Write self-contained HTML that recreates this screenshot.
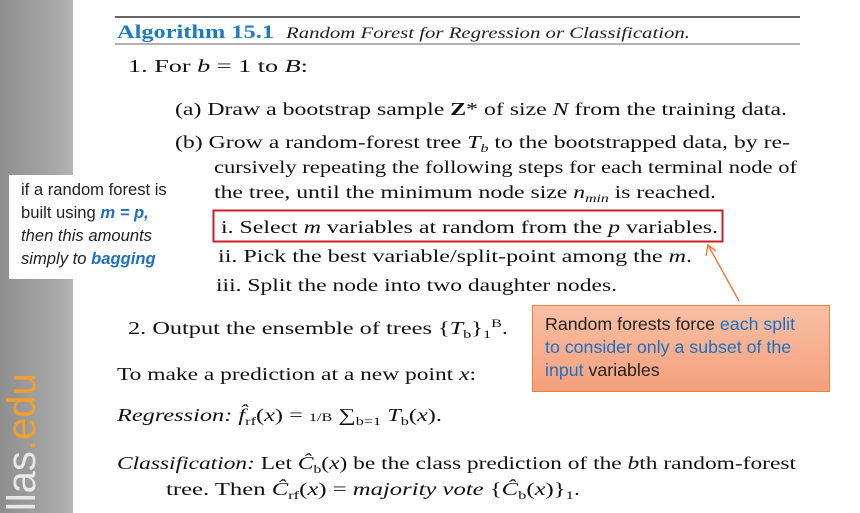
<!DOCTYPE html>
<html><head><meta charset="utf-8"><style>
html,body{margin:0;width:860px;height:513px;overflow:hidden}
body{background:#fff;position:relative;font-family:"Liberation Serif",serif}
#side{position:absolute;left:0;top:0;width:73px;height:513px;background:linear-gradient(90deg,#8e8e8e,#a9a9a9 80%,#b5b5b5);overflow:hidden}
#vt{position:absolute;left:1px;top:520px;transform-origin:0 0;transform:rotate(-90deg);font:40px/42px "Liberation Sans",sans-serif;color:#e8e8e8;white-space:nowrap;}
#vt span{color:#f0a030}
#wb{position:absolute;left:9px;top:175px;width:172px;height:104px;background:#fff;font:16.6px/23px "Liberation Sans",sans-serif;color:#222;padding:3px 0 0 12px;box-sizing:border-box;white-space:nowrap;overflow:hidden}
.b{color:#1f6fc0;font-weight:bold;font-style:italic}
#ob{position:absolute;left:532px;top:305px;width:298px;height:87px;background:linear-gradient(#f8c0a4,#f4a07c);border:1px solid #ee8040;box-sizing:border-box;font:17.8px/23px "Liberation Sans",sans-serif;color:#222;padding:7px 0 0 12px;white-space:nowrap;overflow:hidden}
#ob .c{color:#1b6fc4}
svg{position:absolute;left:0;top:0}
</style></head><body>
<div id="side"><div id="vt">illas<span>.edu</span></div></div>
<svg width="860" height="513" font-family="Liberation Serif, serif" font-size="18" fill="#111">
<line x1="115" y1="17" x2="800" y2="17" stroke="#333" stroke-width="1.5"/>
<line x1="115" y1="44" x2="800" y2="44" stroke="#666" stroke-width="1"/>
<text x="117" y="38" fill="#1f7ac0" font-weight="bold" font-size="19" textLength="157" lengthAdjust="spacingAndGlyphs">Algorithm 15.1</text>
<text x="286" y="38" font-style="italic" font-size="16" fill="#222" textLength="404" lengthAdjust="spacingAndGlyphs">Random Forest for Regression or Classification.</text>
<text x="128" y="72" textLength="180" lengthAdjust="spacingAndGlyphs">1. For <tspan font-style="italic">b</tspan> = 1 to <tspan font-style="italic">B</tspan>:</text>
<text x="175" y="115" textLength="612" lengthAdjust="spacingAndGlyphs">(a) Draw a bootstrap sample <tspan font-weight="bold">Z</tspan>* of size <tspan font-style="italic">N</tspan> from the training data.</text>
<text x="175" y="148" textLength="615" lengthAdjust="spacingAndGlyphs">(b) Grow a random-forest tree <tspan font-style="italic">T</tspan><tspan font-size="12" font-style="italic" dy="4">b</tspan><tspan dy="-4"> to the bootstrapped data, by re-</tspan></text>
<text x="214" y="173" textLength="583" lengthAdjust="spacingAndGlyphs">cursively repeating the following steps for each terminal node of</text>
<text x="214" y="198" textLength="502" lengthAdjust="spacingAndGlyphs">the tree, until the minimum node size <tspan font-style="italic">n</tspan><tspan font-size="12" font-style="italic" dy="4">min</tspan><tspan dy="-4"> is reached.</tspan></text>
<rect x="213.5" y="210.5" width="509" height="31" fill="none" stroke="#c8202a" stroke-width="2"/>
<text x="221" y="233" textLength="497" lengthAdjust="spacingAndGlyphs">i. Select <tspan font-style="italic">m</tspan> variables at random from the <tspan font-style="italic">p</tspan> variables.</text>
<text x="218" y="262" textLength="474" lengthAdjust="spacingAndGlyphs">ii. Pick the best variable/split-point among the <tspan font-style="italic">m</tspan>.</text>
<text x="216" y="291" textLength="401" lengthAdjust="spacingAndGlyphs">iii. Split the node into two daughter nodes.</text>
<text x="128" y="334" textLength="380" lengthAdjust="spacingAndGlyphs">2. Output the ensemble of trees {<tspan font-style="italic">T</tspan><tspan font-size="12" dy="4">b</tspan><tspan dy="-4">}</tspan><tspan font-size="12" dy="4">1</tspan><tspan font-size="12" dy="-11">B</tspan><tspan dy="7">.</tspan></text>
<text x="117" y="380" textLength="359" lengthAdjust="spacingAndGlyphs">To make a prediction at a new point <tspan font-style="italic">x</tspan>:</text>
<text x="117" y="421" textLength="325" lengthAdjust="spacingAndGlyphs"><tspan font-style="italic">Regression:</tspan>  <tspan font-style="italic">f̂</tspan><tspan font-size="12" dy="4">rf</tspan><tspan dy="-4">(</tspan><tspan font-style="italic">x</tspan>) = <tspan font-size="12">1/B</tspan> ∑<tspan font-size="12" dy="4">b=1</tspan><tspan dy="-4"> </tspan><tspan font-style="italic">T</tspan><tspan font-size="12" dy="4">b</tspan><tspan dy="-4">(</tspan><tspan font-style="italic">x</tspan>).</text>
<text x="117" y="469" textLength="679" lengthAdjust="spacingAndGlyphs"><tspan font-style="italic">Classification:</tspan> Let <tspan font-style="italic">Ĉ</tspan><tspan font-size="12" dy="4">b</tspan><tspan dy="-4">(</tspan><tspan font-style="italic">x</tspan>) be the class prediction of the <tspan font-style="italic">b</tspan>th random-forest</text>
<text x="166" y="495" textLength="414" lengthAdjust="spacingAndGlyphs">tree. Then <tspan font-style="italic">Ĉ</tspan><tspan font-size="12" dy="4">rf</tspan><tspan dy="-4">(</tspan><tspan font-style="italic">x</tspan>) = <tspan font-style="italic">majority vote</tspan> {<tspan font-style="italic">Ĉ</tspan><tspan font-size="12" dy="4">b</tspan><tspan dy="-4">(</tspan><tspan font-style="italic">x</tspan>)}<tspan font-size="12" dy="4">1</tspan><tspan dy="-4">.</tspan></text>
<line x1="739" y1="301" x2="708" y2="245" stroke="#ee8040" stroke-width="1.5"/>
<polyline points="706,256 708,245 716,251" fill="none" stroke="#ee8040" stroke-width="1.5"/>
</svg>
<div id="wb">if a random forest is<br>built using <span class="b">m = p,</span><br><i>then this amounts<br>simply to </i><span class="b">bagging</span></div>
<div id="ob">Random forests force <span class="c">each split<br>to consider only a subset of the<br>input</span> variables</div>
</body></html>
